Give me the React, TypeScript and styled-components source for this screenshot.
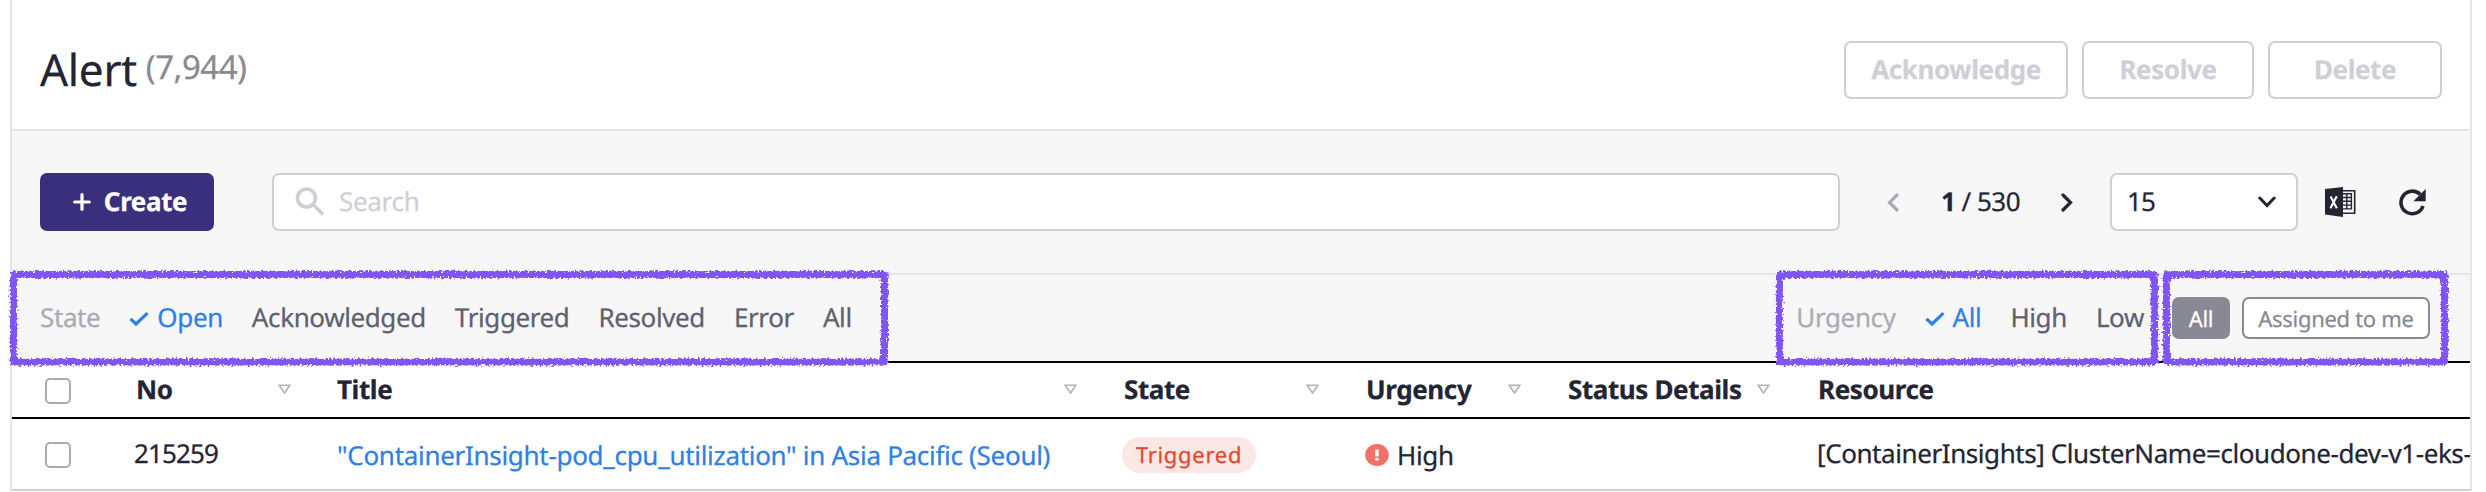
import React from 'react';
import styled, { createGlobalStyle } from 'styled-components';

const GlobalStyle = createGlobalStyle`
  * { box-sizing: border-box; }
  body { margin: 0; background: #fff; text-rendering: geometricPrecision; }
  button { text-rendering: inherit; }
`;

const Page = styled.main`
  position: relative;
  width: 2486px;
  height: 492px;
  padding: 0 14px 1px 10px;
  overflow: hidden;
  font-family: 'Noto Sans', sans-serif;
  font-size: 26px;
  line-height: 36px;
  letter-spacing: -0.3px;
  -webkit-text-stroke-width: 0.25px;
  color: #232533;
`;

const Panel = styled.section`
  height: 491px;
  border: solid #e5e5e8;
  border-width: 0 2px;
  overflow: hidden;
`;

const Header = styled.header`
  display: flex;
  align-items: center;
  justify-content: space-between;
  height: 131px;
  padding: 11px 28px 0 28px;
  border-bottom: 2px solid #e5e5e8;
`;

const Heading = styled.h1`
  display: flex;
  margin: 0 0 2px;
  font-weight: 400;
  font-size: 44px;
  line-height: 60px;
`;

const Count = styled.span`
  margin-left: 9px;
  font-size: 33px;
  line-height: 56px;
  letter-spacing: -0.5px;
  color: #898995;
`;

const Actions = styled.div`
  display: flex;
  gap: 14px;
`;

const Button = styled.button<{ $width: number; $primary?: boolean }>`
  display: flex;
  align-items: center;
  justify-content: center;
  gap: 13px;
  width: ${(p) => p.$width}px;
  height: 58px;
  padding: 0 0 2px ${(p) => (p.$primary ? 6 : 0)}px;
  border: ${(p) => (p.$primary ? 'none' : '2px solid #cfcfd7')};
  border-radius: 7px;
  background: ${(p) => (p.$primary ? '#392f7d' : '#fff')};
  color: ${(p) => (p.$primary ? '#fff' : '#cfcfd7')};
  font: 700 26px/36px 'Noto Sans', sans-serif;
  letter-spacing: -0.4px;
`;

const Toolbar = styled.div`
  display: flex;
  align-items: center;
  height: 144px;
  padding: 0 28px;
  background: #f7f7f7;
  border-bottom: 2px solid #e5e5e8;
`;

const SearchBox = styled.div`
  display: flex;
  align-items: center;
  gap: 14px;
  width: 1568px;
  height: 58px;
  margin-left: 58px;
  padding: 0 0 2px 21px;
  border: 2px solid #cfcfd7;
  border-radius: 7px;
  background: #fff;
  color: #cfcfd7;
`;

const Pager = styled.div`
  display: flex;
  align-items: center;
  justify-content: space-between;
  width: 186px;
  margin-left: 47px;
`;

const Digits = styled.span`
  letter-spacing: -0.85px;
`;

const PageText = styled.span`
  margin: 0 0 2px 1px;
  letter-spacing: -0.5px;
`;

const Select = styled.div`
  display: flex;
  align-items: center;
  justify-content: space-between;
  width: 188px;
  height: 58px;
  margin-left: 37px;
  padding: 0 20px 2px 15px;
  border: 2px solid #cfcfd7;
  border-radius: 7px;
  background: #fff;
`;

const Glyph = styled.svg<{ $drop?: number }>`
  flex: none;
  margin-top: ${(p) => p.$drop ?? 0}px;
`;

const IconButton = styled.span<{ $left: number }>`
  display: flex;
  margin-left: ${(p) => p.$left}px;
`;

const FilterBar = styled.div`
  display: flex;
  align-items: center;
  height: 86px;
  padding: 0 40px 0 28px;
  background: #f7f7f7;
`;

const FilterGroup = styled.div<{ $push?: boolean }>`
  display: flex;
  align-items: center;
  gap: 29px;
  margin-bottom: 2px;
  margin-left: ${(p) => (p.$push ? 'auto' : '0')};
  letter-spacing: -0.39px;
`;

const FilterLabel = styled.span`
  color: #a9abb5;
`;

const FilterItem = styled.span<{ $active?: boolean }>`
  display: flex;
  align-items: center;
  gap: 8px;
  color: ${(p) => (p.$active ? '#2f80e6' : '#5f616e')};
`;

const Chips = styled.div`
  display: flex;
  gap: 12px;
  margin-left: 28px;
`;

const Chip = styled.span<{ $width: number; $filled?: boolean }>`
  display: flex;
  align-items: center;
  justify-content: center;
  width: ${(p) => p.$width}px;
  height: 42px;
  padding-top: 1px;
  border: 2px solid #898995;
  border-radius: 7px;
  font-size: 22px;
  color: ${(p) => (p.$filled ? '#fff' : '#898995')};
  background: ${(p) => (p.$filled ? '#898995' : '#fff')};
`;

const columns = '91px 230px 787px 242px 202px 250px 1fr';

const HeadRow = styled.div`
  display: grid;
  grid-template-columns: ${columns};
  align-items: center;
  height: 58px;
  border: solid #000;
  border-width: 2px 0;
  font-weight: 700;
  letter-spacing: -0.4px;
`;

const Row = styled.div`
  display: grid;
  grid-template-columns: ${columns};
  align-items: center;
  height: 72px;
  border-bottom: 2px solid #cfcfd7;
`;

const Cell = styled.div<{ $sortGap?: number; $left?: number; $drop?: number }>`
  display: flex;
  align-items: center;
  justify-content: space-between;
  padding-left: ${(p) => p.$left ?? 4}px;
  padding-top: ${(p) => Math.max(p.$drop ?? 0, 0)}px;
  padding-bottom: ${(p) => Math.max(-(p.$drop ?? -2), 0)}px;
  padding-right: ${(p) => p.$sortGap ?? 0}px;
  white-space: nowrap;
`;

const ResourceText = styled.span`
  letter-spacing: -0.42px;
`;

const Start = styled.div`
  display: flex;
  align-items: center;
  flex: 1;
  gap: 8px;
`;

const Checkbox = styled.span`
  width: 26px;
  height: 26px;
  border: 2px solid #a9abb5;
  border-radius: 5px;
  background: #fff;
`;

const TitleLink = styled.span`
  color: #2f80e6;
`;

const StateBadge = styled.span`
  display: flex;
  align-items: center;
  justify-content: center;
  width: 134px;
  height: 36px;
  border-radius: 18px;
  background: #fbe8e6;
  color: #e0492f;
  font-size: 22px;
  letter-spacing: 0.7px;
`;

const Overlay = styled.svg`
  position: absolute;
  left: 0;
  top: 0;
  pointer-events: none;
`;

const Chevron = ({ color, flip }: { color: string; flip?: boolean }) => (
  <svg width="12" height="19" viewBox="0 0 12 19" fill="none" stroke={color} strokeWidth="3.2" strokeLinecap="round">
    <path d={flip ? 'M2 2 9.5 9.5 2 17' : 'M10 2 2.5 9.5 10 17'} />
  </svg>
);

const Check = () => (
  <Glyph $drop={3} width="20" height="16" viewBox="0 0 20 16" fill="none" stroke="#2f80e6" strokeWidth="3.2">
    <path d="M1.5 7.8 7 13 18.5 2.2" />
  </Glyph>
);

const Sort = () => (
  <svg width="13" height="11" viewBox="0 0 13 11" fill="none" stroke="#b1b3bc" strokeWidth="1.6">
    <path d="M1.2 1.3H11.8L6.5 9Z" />
  </svg>
);

const ExcelIcon = () => (
  <svg width="32" height="30" viewBox="0 0 32 30">
    <path fill="#232533" d="M1 2 19 0V30L1 27.5Z" />
    <path fill="none" stroke="#232533" strokeWidth="1.6" strokeLinejoin="round" d="M19 3.8H30.7V26.2H19" />
    <path fill="none" stroke="#232533" strokeWidth="1.4" d="M19 6.7H27.6M19 10.5H27.6M19 14.3H27.6M19 18.1H27.6M19 21.9H27.6M22.8 6V22.6M27.4 6V22.6" />
    <path fill="none" stroke="#f7f7f7" strokeWidth="2.2" d="M6.6 9.6 12.8 21.2M12.8 9.2 6.4 21.2" />
  </svg>
);

const RefreshIcon = () => (
  <svg width="27" height="27" viewBox="0 0 27 27">
    <path fill="none" stroke="#232533" strokeWidth="3.6" d="M24 17A11.3 11.3 0 1 1 21.2 5.4" />
    <path fill="#232533" d="M26.7 0V12.3H14.4Z" />
  </svg>
);

const stateFilters = ['Acknowledged', 'Triggered', 'Resolved', 'Error', 'All'];

const highlights = [
  { left: 13.5, right: 884.5 },
  { left: 1779.5, right: 2154.5 },
  { left: 2166.5, right: 2444.5 },
];

const Highlights = () => (
  <Overlay width="2486" height="492" viewBox="0 0 2486 492">
    <defs>
      <filter id="crayon" filterUnits="userSpaceOnUse" x="0" y="262" width="2486" height="112" colorInterpolationFilters="sRGB">
        <feTurbulence type="fractalNoise" baseFrequency="0.5" numOctaves="3" seed="4" result="noise" />
        <feGaussianBlur in="SourceAlpha" stdDeviation="1.9" result="soft" />
        <feComposite in="soft" in2="noise" operator="arithmetic" k1="0" k2="0.45" k3="0.55" k4="0" result="mix" />
        <feComponentTransfer in="mix" result="grain">
          <feFuncA type="linear" slope="10" intercept="-4.7" />
        </feComponentTransfer>
        <feComposite in="grain" in2="soft" operator="arithmetic" k1="6" k2="0" k3="0" k4="0" result="edge" />
        <feFlood floodColor="#7f56f5" />
        <feComposite in2="edge" operator="in" />
      </filter>
    </defs>
    <g filter="url(#crayon)" fill="none" stroke="#7f56f5" strokeWidth="6.5">
      {highlights.map(({ left, right }) => (
        <path key={left} d={`M${left} 274.5H${right}V362H${left}Z`} />
      ))}
    </g>
  </Overlay>
);

export default function App() {
  return (
    <Page>
      <GlobalStyle />
      <Panel>
        <Header>
          <Heading>Alert<Count>(7,944)</Count></Heading>
          <Actions>
            <Button $width={224}>Acknowledge</Button>
            <Button $width={172}>Resolve</Button>
            <Button $width={174}>Delete</Button>
          </Actions>
        </Header>
        <Toolbar>
          <Button $width={174} $primary>
            <Glyph $drop={2} width="18" height="18" viewBox="0 0 18 18" stroke="#fff" strokeWidth="3.2" strokeLinecap="round">
              <path d="M9 1.7V16.3M1.7 9H16.3" />
            </Glyph>
            Create
          </Button>
          <SearchBox>
            <svg width="30" height="30" viewBox="0 0 30 30" fill="none" stroke="#cfcfd7" strokeWidth="3.6">
              <circle cx="11.5" cy="12" r="9" />
              <path d="M18 18.5 28 28.5" />
            </svg>
            Search
          </SearchBox>
          <Pager>
            <Chevron color="#a9abb5" />
            <PageText><b>1</b> / 530</PageText>
            <Chevron color="#232533" flip />
          </Pager>
          <Select>
            <Digits>15</Digits>
            <Glyph $drop={2} width="18" height="12" viewBox="0 0 18 12" fill="none" stroke="#232533" strokeWidth="3" strokeLinecap="round">
              <path d="M1.8 2 9 9.5 16.2 2" />
            </Glyph>
          </Select>
          <IconButton $left={26}><ExcelIcon /></IconButton>
          <IconButton $left={43}><RefreshIcon /></IconButton>
        </Toolbar>
        <FilterBar>
          <FilterGroup>
            <FilterLabel>State</FilterLabel>
            <FilterItem $active><Check />Open</FilterItem>
            {stateFilters.map((name) => <FilterItem key={name}>{name}</FilterItem>)}
          </FilterGroup>
          <FilterGroup $push>
            <FilterLabel>Urgency</FilterLabel>
            <FilterItem $active><Check />All</FilterItem>
            <FilterItem>High</FilterItem>
            <FilterItem>Low</FilterItem>
          </FilterGroup>
          <Chips>
            <Chip $width={58} $filled>All</Chip>
            <Chip $width={188}>Assigned to me</Chip>
          </Chips>
        </FilterBar>
        <HeadRow>
          <Cell $left={33} $drop={2}><Checkbox /></Cell>
          <Cell $left={33} $sortGap={42}>No<Sort /></Cell>
          <Cell $sortGap={43}>Title<Sort /></Cell>
          <Cell $sortGap={43}>State<Sort /></Cell>
          <Cell $sortGap={43}>Urgency<Sort /></Cell>
          <Cell $sortGap={44}>Status Details<Sort /></Cell>
          <Cell>Resource</Cell>
        </HeadRow>
        <Row>
          <Cell $left={33} $drop={2}><Checkbox /></Cell>
          <Cell $left={31}><Digits>215259</Digits></Cell>
          <Cell $drop={2}><TitleLink>"ContainerInsight-pod_cpu_utilization" in Asia Pacific (Seoul)</TitleLink></Cell>
          <Cell $left={2} $drop={2}><StateBadge>Triggered</StateBadge></Cell>
          <Cell $left={3} $drop={2}>
            <Start>
              <svg width="24" height="22" viewBox="0 0 24 22">
                <ellipse cx="12" cy="11" rx="11.8" ry="10.9" fill="#f0706b" />
                <path d="M12 5.5V12.5M12 14V16.5" stroke="#fff" strokeWidth="3.4" />
              </svg>
              High
            </Start>
          </Cell>
          <Cell />
          <Cell $left={3}><ResourceText>[ContainerInsights] ClusterName=cloudone-dev-v1-eks-</ResourceText></Cell>
        </Row>
      </Panel>
      <Highlights />
    </Page>
  );
}
